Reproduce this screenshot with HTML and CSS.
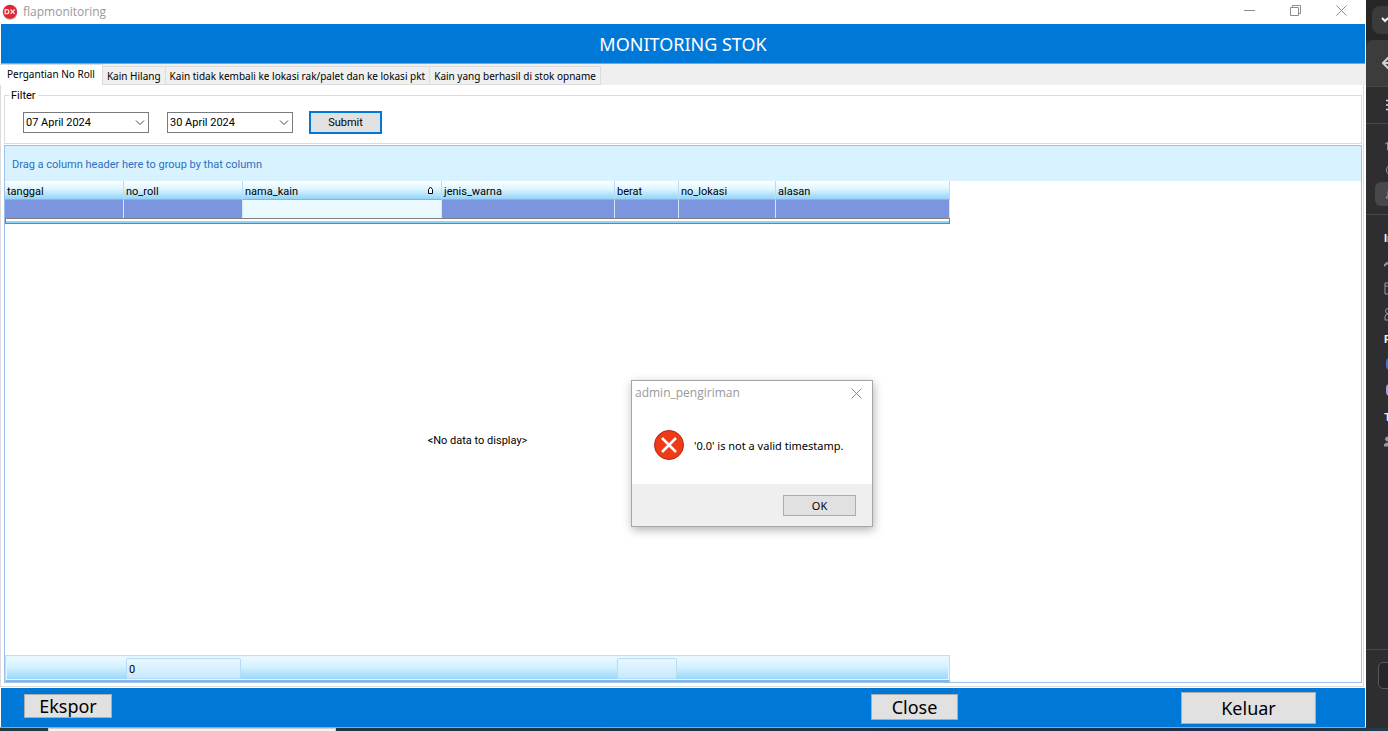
FILE: index.html
```
<!DOCTYPE html>
<html lang="id">
<head>
<meta charset="utf-8">
<title>flapmonitoring</title>
<link rel="stylesheet" href="styles.css">
</head>
<body>
<div class="desktop">
  <main class="window">
    <header class="titlebar">
      <svg class="app-icon" width="16" height="16" viewBox="0 0 16 16" aria-hidden="true">
        <circle cx="8" cy="8.500" r="7.300" fill="#b9a3a6"/>
        <circle cx="8" cy="7.700" r="7" fill="#dc2a35"/>
        <path d="M3.200 5.700h1.600q2 0 2 2t-2 2H3.200zM8.500 5.500l4.200 4.400M12.700 5.500l-4.200 4.400" fill="none" stroke="#fbe3e4" stroke-width="1.300"/>
      </svg>
      <span class="app-name">flapmonitoring</span>
      <div class="window-controls">
        <button type="button" aria-label="Minimize"><svg width="11" height="11" viewBox="0 0 11 11"><path d="M0 5.500h11"/></svg></button>
        <button type="button" aria-label="Restore"><svg width="11" height="11" viewBox="0 0 11 11"><path d="M.5 2.500h8v8h-8zM2.500 2.500v-2h8v8h-2"/></svg></button>
        <button type="button" aria-label="Close window"><svg width="11" height="11" viewBox="0 0 11 11"><path d="M.5.5l10 10M10.500.5l-10 10"/></svg></button>
      </div>
    </header>
    <h1 class="banner">MONITORING STOK</h1>
    <div class="tabs" role="tablist">
      <button type="button" class="tab tab-active" role="tab" aria-selected="true">Pergantian No Roll</button>
      <button type="button" class="tab" role="tab">Kain Hilang</button>
      <button type="button" class="tab" role="tab">Kain tidak kembali ke lokasi rak/palet dan ke lokasi pkt</button>
      <button type="button" class="tab" role="tab">Kain yang berhasil di stok opname</button>
    </div>
    <section class="page">
      <fieldset class="filter">
        <legend>Filter</legend>
        <div class="filter-row">
          <div class="date">
            <select aria-label="Tanggal awal"><option>07 April 2024</option></select>
            <svg width="10" height="6" viewBox="0 0 10 6" aria-hidden="true"><path d="M1 .5l4 4 4-4"/></svg>
          </div>
          <div class="date">
            <select aria-label="Tanggal akhir"><option>30 April 2024</option></select>
            <svg width="10" height="6" viewBox="0 0 10 6" aria-hidden="true"><path d="M1 .5l4 4 4-4"/></svg>
          </div>
          <button type="button" class="button submit">Submit</button>
        </div>
      </fieldset>
      <div class="grid">
        <div class="group-bar">Drag a column header here to group by that column</div>
        <div class="grid-body">
          <table class="data">
            <colgroup><col class="c-date"><col class="c-roll"><col class="c-name"><col class="c-color"><col class="c-weight"><col class="c-place"><col class="c-reason"></colgroup>
            <thead>
              <tr>
                <th>tanggal</th><th>no_roll</th>
                <th><div class="sorted">nama_kain <svg width="7" height="9" viewBox="0 0 7 9" aria-hidden="true"><path d="M1.500 3.500l2-2.500 2 2.500v4h-4z"/></svg></div></th>
                <th>jenis_warna</th><th>berat</th><th>no_lokasi</th><th>alasan</th>
              </tr>
            </thead>
            <tbody>
              <tr><td></td><td></td><td class="focused"></td><td></td><td></td><td></td><td></td></tr>
            </tbody>
          </table>
          <div class="separator"></div>
          <div class="empty">&lt;No data to display&gt;</div>
          <div class="summary">
            <span class="cell cell-count">0</span>
            <span class="cell cell-weight"></span>
          </div>
        </div>
      </div>
    </section>
    <footer class="actions">
      <button type="button" class="button export">Ekspor</button>
      <button type="button" class="button close">Close</button>
      <button type="button" class="button quit">Keluar</button>
    </footer>
  </main>

  <aside class="side">
    <div class="side-top"><div class="round"><svg width="8" height="8" viewBox="0 0 8 8"><path d="M1 2l3 3 3-3" stroke="#f0f0f0" stroke-width="2"/></svg></div></div>
    <div class="side-nav"><svg width="14" height="14" viewBox="0 0 14 14"><path d="M13 7H1M7 1L1 7l6 6" stroke="#d0d0d0" stroke-width="2"/></svg></div>
    <div class="side-menu"><svg width="12" height="12" viewBox="0 0 12 12"><path d="M0 1.500h12M0 6h12M0 10.500h12" stroke="#d8d8d8" stroke-width="1.300"/></svg></div>
    <div class="side-links">
      <div class="link"><svg width="14" height="12" viewBox="0 0 14 12"><path d="M0 5l7-4 7 4M2.500 4v7h9V4"/></svg></div>
      <div class="link"><svg width="14" height="14" viewBox="0 0 14 14"><circle cx="7" cy="7" r="5.500"/></svg></div>
      <div class="link link-active"><svg width="14" height="14" viewBox="0 0 14 14"><path d="M1 11l2-3V5q0-4 4-4t4 4v3l2 3z"/></svg></div>
    </div>
    <div class="side-groups">
      <strong>Insights</strong>
      <div class="item"><svg width="12" height="12" viewBox="0 0 12 12"><path d="M0 9l3-3 3 2 5-6" stroke-width="2"/></svg></div>
      <div class="item"><svg width="13" height="13" viewBox="0 0 13 13"><path d="M1 1h11v11H1zM1 4h11"/></svg></div>
      <div class="item"><svg width="14" height="14" viewBox="0 0 14 14"><circle cx="4" cy="4" r="2.500"/><path d="M1 13V10q0-3 3-3t3 3v3z"/></svg></div>
      <strong>Projects</strong>
      <div class="item item-dot"><span class="dot dot-blue"></span></div>
      <div class="item item-dot"><span class="dot dot-violet"></span></div>
      <strong>Team</strong>
      <div class="item"><svg width="12" height="12" viewBox="0 0 12 12"><circle cx="3.500" cy="3" r="2" fill="#999"/><path d="M0 10q0-3 4-3t4 3z" fill="#999"/></svg></div>
    </div>
    <div class="side-bottom"><div class="invite"></div></div>
  </aside>

  <div class="taskbar"><div class="task"></div></div>

  <div class="dialog" role="alertdialog" aria-labelledby="dlg-title">
    <div class="dialog-title">
      <span id="dlg-title">admin_pengiriman</span>
      <button type="button" aria-label="Close dialog"><svg width="11" height="11" viewBox="0 0 11 11"><path d="M.5.5l10 10M10.500.5l-10 10"/></svg></button>
    </div>
    <div class="dialog-body">
      <svg width="32" height="32" viewBox="0 0 32 32" aria-hidden="true">
        <circle cx="16" cy="16" r="14.500" fill="#f03a17" stroke="#a92b16"/>
        <path d="M9 9l14 14M23 9L9 23" stroke="#fff" stroke-width="2.500"/>
      </svg>
      <span>'0.0' is not a valid timestamp.</span>
    </div>
    <div class="dialog-actions"><button type="button" class="button ok">OK</button></div>
  </div>
</div>
</body>
</html>
```
FILE: styles.css
```
* { box-sizing: border-box; }

body {
  margin: 0;
  font: 11px/15px Roboto, "Noto Sans", sans-serif;
  color: #000;
  background: #fff;
}

button, select { font: inherit; color: inherit; border-radius: 0; }
svg { display: block; fill: none; flex: none; }

.desktop {
  position: relative;
  height: 100vh;
  display: grid;
  grid-template: minmax(0, 1fr) 3px / minmax(0, 1fr) 22px;
  overflow: hidden;
}

.window {
  display: flex;
  flex-direction: column;
  border-bottom: 1px solid #9aa4ac;
  background: #fff;
}

/* Title bar */
.titlebar {
  height: 24px;
  display: flex;
  align-items: center;
  gap: 5px;
  padding-left: 2px;
}
.app-name { flex: 1; font: 12px/16px "Open Sans", sans-serif; color: #999; }
.window-controls { display: flex; align-self: flex-start; margin-right: 2px; }
.window-controls button {
  width: 46px;
  height: 21px;
  padding: 0;
  display: grid;
  place-items: center;
  border: 0;
  background: none;
}
.window-controls svg, .dialog-title svg { stroke: #8c8c8c; }

.banner {
  margin: 0 1px;
  height: 40px;
  border-bottom: 1px solid #8fa3b3;
  background: #0078d7;
  color: #fff;
  font: 18px/41px "Noto Sans", sans-serif;
  text-align: center;
}

/* Tabs */
.tabs {
  display: flex;
  align-items: flex-end;
  height: 21px;
  background: #efefef;
  font-family: "Noto Sans", sans-serif;
  font-size: 10px;
}
.tab {
  height: 19px;
  padding: 1px 4px 0;
  border: 1px solid #dcdcdc;
  border-left: 0;
  background: #f0f0f0;
  white-space: nowrap;
}
.tab-active {
  height: 21px;
  padding: 0 7px 2px;
  border-bottom: 0;
  background: #fff;
}

.page {
  flex: 1;
  min-height: 0;
  display: flex;
  flex-direction: column;
  gap: 1px;
  padding: 2px 1px 3px 3px;
  margin: 0 2px 1px 0;
  border: 1px solid #dcdcdc;
  border-top: 0;
}

.filter {
  margin: 0;
  padding: 0 0 9px 18px;
  border: 1px solid #dcdcdc;
}
.filter legend { margin-left: -14px; padding: 1px 2px 0; }
.filter-row { display: flex; align-items: center; padding-top: 8px; }
.date { display: grid; align-items: center; width: 126px; margin-right: 18px; }
.date select, .date svg { grid-area: 1 / 1; }
.date select {
  width: 100%;
  height: 21px;
  padding: 0 2px;
  border: 1px solid #7a7a7a;
  background: #fff;
  appearance: none;
}
.date svg { justify-self: end; margin-right: 4px; stroke: #444; pointer-events: none; }

.button {
  padding: 0;
  border: 1px solid #adadad;
  background: #e1e1e1;
}
.submit { width: 73px; height: 23px; margin-left: -2px; border: 2px solid #0078d7; }

/* Data grid */
.grid {
  flex: 1;
  display: flex;
  flex-direction: column;
  border: 1px solid #9bc1ec;
}
.group-bar {
  height: 35px;
  padding: 0 7px;
  background: #d9f2ff;
  color: #2a70c0;
  line-height: 38px;
}
.grid-body { flex: 1; width: 945px; display: flex; flex-direction: column; }
.data { width: 945px; table-layout: fixed; border-collapse: separate; border-spacing: 0; }
.c-date, .c-roll { width: 119px; }
.c-name { width: 199px; }
.c-color { width: 173px; }
.c-weight { width: 64px; }
.c-place { width: 97px; }
.c-reason { width: 174px; }
.data th {
  height: 19px;
  padding: 3px 2px 0;
  border-right: 1px solid #b9dcf6;
  border-bottom: 1px solid #84b4ea;
  background: linear-gradient(#fff, #dcf5ff 45%, #94d3f9);
  font-weight: normal;
  text-align: left;
  line-height: 15px;
}
.sorted { display: flex; justify-content: space-between; padding-right: 5px; }
.sorted svg { margin-top: 2px; fill: #fff; stroke: #000; }
.data td {
  height: 18px;
  padding: 0;
  border-right: 1px solid #d5e8fa;
  background: #7b96df;
}
.data .focused { background: #eaf8ff; }
.separator {
  height: 6px;
  border: 1px solid #808080;
  background: linear-gradient(#fff 50%, #94d3f9 50%);
}
.empty { flex: 1; display: grid; place-items: center; padding-top: 2px; }

.summary {
  display: flex;
  align-items: flex-start;
  height: 27px;
  padding: 2px 0 0 120px;
  border: 1px solid #bfdcf5;
  border-bottom: 2px solid #84b4ea;
  background: linear-gradient(#edfaff, #d3f1ff 45%, #97d5fa);
  box-shadow: inset 0 0 0 1px #e6f6ff;
}
.cell {
  height: 21px;
  padding: 0 2px;
  border: 1px solid #b4dcf6;
  border-radius: 2px;
  background: linear-gradient(#e9f8ff, #c8e8fc);
  line-height: 21px;
}
.cell-count { width: 115px; margin-right: 376px; }
.cell-weight { width: 60px; }

.actions {
  display: flex;
  align-items: flex-start;
  height: 39px;
  margin: 0 1px;
  padding: 4px 49px 0 23px;
  background: #0078d7;
  font: 18px/24px "Noto Sans", sans-serif;
}
.export { width: 88px; height: 24px; margin: 2px auto 0 0; line-height: 20px; }
.close { width: 87px; height: 26px; margin: 2px 223px 0 0; line-height: 24px; }
.quit { width: 135px; height: 32px; }

/* Neighbouring application, cut off by the screen edge */
.side { background: #2e2e30; overflow: hidden; color: #f0f0f0; }
.side svg { stroke: #999; }
.side-top { height: 40px; padding: 6px; background: #272727; }
.round { width: 28px; height: 28px; padding: 10px 9px; border-radius: 8px; background: #3b3b3b; }
.side-nav { height: 47px; padding: 16px; border-bottom: 1px solid #48484a; border-radius: 8px 0 0 0; background: #3c3c3c; }
.side-menu { height: 37px; padding: 12px 20px; border-bottom: 1px solid #48484a; }
.side-links { height: 91px; padding: 10px 0 0 9px; border-bottom: 1px solid #48484a; }
.link { width: 32px; height: 24px; padding: 5px 10px; border-radius: 6px; }
.link-active { background: #48484a; }
.side-groups { height: 435px; padding: 10px 0 0 18px; border-bottom: 1px solid #48484a; }
.side-groups strong { display: block; height: 26px; font-family: Inter, sans-serif; line-height: 26px; white-space: nowrap; }
.item { height: 25px; padding: 6px 0; }
.item-dot { height: 26px; padding: 6px 2px; }
.dot { display: block; width: 12px; height: 12px; border-radius: 4px; }
.dot-blue { background: #4573d2; }
.dot-violet { background: #a99cf5; }
.side-bottom { padding: 12px; }
.invite { width: 40px; height: 27px; border: 1px solid #58585a; border-radius: 5px; background: #27272a; }

.taskbar { grid-column: 1 / -1; padding-left: 48px; background: linear-gradient(90deg, #223a40, #202c4c 90%, #243c48); }
.task { width: 288px; height: 3px; border: 1px solid #ccc; border-bottom: 0; background: #f2f2f2; }

/* Message box floating over the window */
.dialog {
  position: absolute;
  left: 631px;
  top: 380px;
  width: 242px;
  border: 1px solid #a6a6a6;
  background: #fff;
  box-shadow: 1px 3px 9px rgba(0, 0, 0, .3);
  font-family: "Noto Sans", sans-serif;
}
.dialog-title {
  display: flex;
  justify-content: space-between;
  align-items: center;
  height: 24px;
  padding: 0 10px 0 3px;
  font: 12px/16px "Open Sans", sans-serif;
  color: #999;
}
.dialog-title button { padding: 0; border: 0; background: none; }
.dialog-body { display: flex; align-items: center; gap: 9px; height: 79px; padding-left: 21px; }
.dialog-body span { padding-top: 2px; }
.dialog-actions { display: flex; justify-content: flex-end; padding: 11px 16px 10px; background: #efefef; }
.ok { width: 73px; height: 21px; }
```
